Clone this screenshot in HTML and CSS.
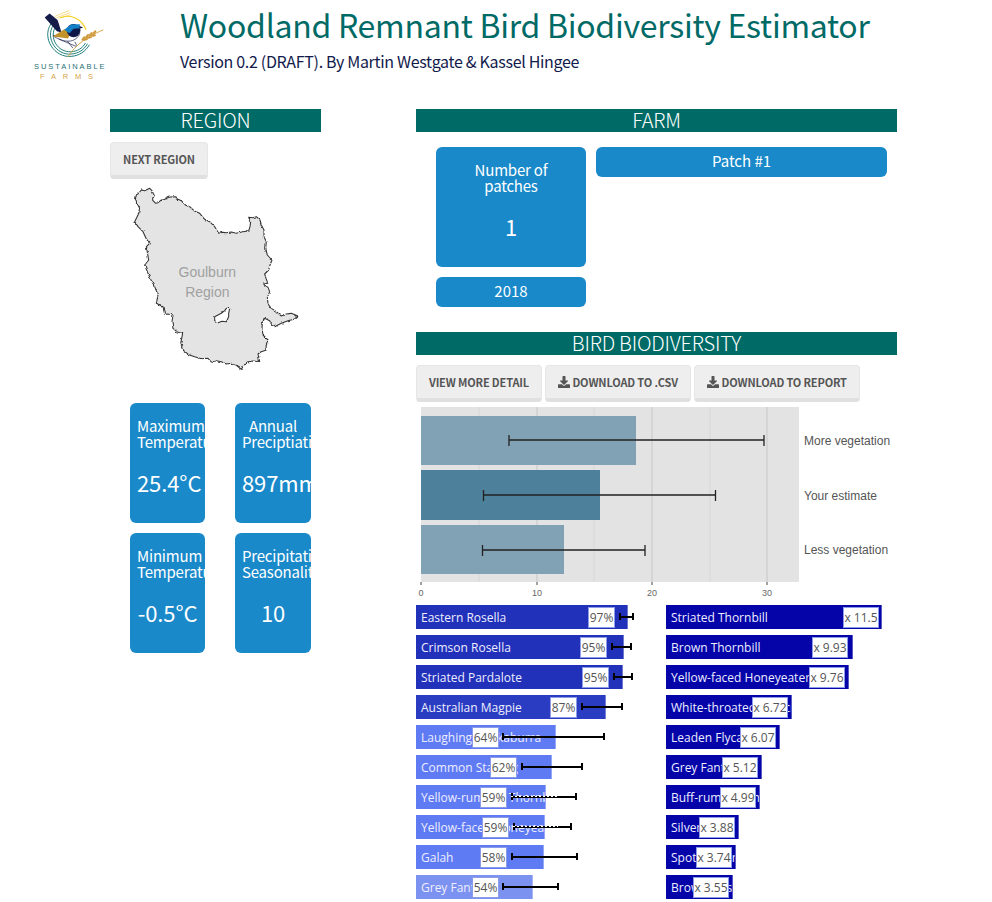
FILE: index.html
```html
<!DOCTYPE html>
<html lang="en">
<head>
<meta charset="utf-8">
<title>Woodland Remnant Bird Biodiversity Estimator</title>
<link rel="stylesheet" href="styles.css">
</head>
<body>
<header class="header">
  <div class="logo">
    <svg class="logo-art" viewBox="130 25 190 155" width="63" height="52" aria-hidden="true">
      <g fill="none" stroke="#f4dc8a" stroke-width="3"><path d="M165 50 L210 31"/><path d="M170 54 L212 38"/><path d="M176 55 L214 44"/></g>
      <path d="M182 54 C215 40 248 58 260 90" fill="none" stroke="#f5d21f" stroke-width="3.500"/>
      <g fill="none" stroke="#1f7f7d" stroke-width="3">
        <path d="M154 72 C125 115 165 175 215 170 C240 168 258 155 270 135"/>
        <path d="M161 76 C136 115 170 167 215 163 C238 161 254 150 264 132"/>
        <path d="M168 80 C147 115 175 158 214 156 C234 155 248 146 258 130"/>
      </g>
      <path d="M135 53 L150 41 L174 60 L186 98 L172 94 Z" fill="#161c4a"/>
      <path d="M160 108 C185 124 222 136 240 104 L242 88 L208 100 Z" fill="#fff" stroke="#161c4a" stroke-width="2"/>
      <path d="M160 110 L194 88 L214 94 L206 116 Z" fill="#c2932a"/>
      <circle cx="222" cy="92" r="20" fill="#0d1848"/>
      <path d="M194 90 L214 74 L241 73 L241 85 L222 87 L210 100 Z" fill="#1280c6"/>
      <path d="M240 78 L251 83 L240 87 Z" fill="#0d1848"/>
      <path d="M204 124 L220 145 M226 126 L232 138 M178 118 L230 140" stroke="#161c4a" stroke-width="2" fill="none"/>
      <path d="M205 172 C222 145 250 115 312 90" fill="none" stroke="#d6a548" stroke-width="3"/>
      <g fill="#cf9a3c">
        <ellipse cx="252" cy="116" rx="8" ry="3.500" transform="rotate(-50 252 116)"/>
        <ellipse cx="263" cy="109" rx="8" ry="3.500" transform="rotate(-50 263 109)"/>
        <ellipse cx="274" cy="103" rx="8" ry="3.500" transform="rotate(-50 274 103)"/>
        <ellipse cx="285" cy="98" rx="8" ry="3.500" transform="rotate(-50 285 98)"/>
        <ellipse cx="258" cy="119" rx="8" ry="3.500" transform="rotate(-10 258 119)"/>
        <ellipse cx="270" cy="113" rx="8" ry="3.500" transform="rotate(-10 270 113)"/>
        <ellipse cx="282" cy="107" rx="8" ry="3.500" transform="rotate(-10 282 107)"/>
      </g>
    </svg>
    <div class="logo-top">SUSTAINABLE</div>
    <div class="logo-bottom">FARMS</div>
  </div>
  <div class="heading">
    <h1 class="title">Woodland Remnant Bird Biodiversity Estimator</h1>
    <p class="byline">Version 0.2 (DRAFT). By Martin Westgate &amp; Kassel Hingee</p>
  </div>
</header>

<main class="main">
  <section class="col-left">
    <h2 class="section-title">REGION</h2>
    <button class="btn btn-next">NEXT REGION</button>
    <svg class="map" viewBox="0 0 633 600" width="211" height="200" role="img" aria-label="Goulburn Region map">
      <defs>
        <filter id="rough" x="-5%" y="-5%" width="110%" height="110%" color-interpolation-filters="sRGB">
          <feTurbulence type="fractalNoise" baseFrequency="0.09" numOctaves="2" seed="4"/>
          <feDisplacementMap in="SourceGraphic" scale="9" xChannelSelector="R" yChannelSelector="G"/>
        </filter>
      </defs>
      <path class="map-shape" transform="translate(4 0)" fill-rule="evenodd" d="M75 45 L82 40 L90 30 L100 32 L115 25 L122 32 L128 45 L124 55 L125 62 L133 70 L140 68 L150 60 L160 58 L172 52 L190 50 L200 58 L210 62 L222 75 L235 80 L248 92 L265 100 L280 118 L295 125 L310 140 L316 150 L322 160 L335 157 L345 158 L360 156 L375 160 L395 155 L412 153 L416 140 L418 125 L412 112 L425 113 L435 110 L446 120 L450 135 L458 150 L458 170 L465 185 L463 205 L468 225 L482 240 L476 255 L472 270 L460 282 L464 295 L470 310 L456 312 L470 322 L475 335 L468 352 L470 372 L480 385 L495 395 L510 408 L525 402 L540 400 L560 408 L548 418 L530 422 L510 430 L490 440 L480 432 L475 422 L460 415 L453 428 L452 445 L455 465 L470 480 L464 495 L465 510 L448 516 L440 522 L445 545 L425 543 L410 545 L400 552 L390 568 L375 556 L360 550 L345 552 L330 545 L315 542 L300 546 L290 535 L270 536 L250 530 L232 524 L215 510 L208 490 L214 460 L198 456 L185 445 L182 425 L185 405 L172 402 L160 403 L155 380 L135 370 L140 345 L130 320 L118 298 L110 280 L100 255 L112 240 L105 200 L115 190 L104 175 L95 155 L80 140 L70 125 L80 105 L85 85 L78 72 L72 60 Z M310 410 L320 405 L330 400 L340 392 L345 385 L355 385 L352 400 L352 410 L345 425 L332 424 L320 428 L310 422 Z"/>
      <text class="map-label" x="292" y="290">Goulburn</text>
      <text class="map-label" x="292" y="350">Region</text>
    </svg>
    <div class="stats">
      <div class="card card-tall">
        <div class="card-label">Maximum Temperature</div>
        <div class="card-value">25.4°C</div>
      </div>
      <div class="card card-tall">
        <div class="card-label">Annual Preciptiation</div>
        <div class="card-value">897mm</div>
      </div>
      <div class="card card-tall">
        <div class="card-label">Minimum Temperature</div>
        <div class="card-value">-0.5°C</div>
      </div>
      <div class="card card-tall">
        <div class="card-label">Precipitation Seasonality</div>
        <div class="card-value">10</div>
      </div>
    </div>
  </section>

  <section class="col-right">
    <h2 class="section-title">FARM</h2>
    <div class="farm">
      <div class="farm-side">
        <div class="card card-tall card-wrap">
          <div class="card-label">Number of patches</div>
          <div class="card-value">1</div>
        </div>
        <div class="card card-short">2018</div>
      </div>
      <div class="farm-patches">
        <div class="card card-short">Patch #1</div>
      </div>
    </div>

    <h2 class="section-title">BIRD BIODIVERSITY</h2>
    <div class="btn-row">
      <button class="btn btn-detail">VIEW MORE DETAIL</button>
      <button class="btn btn-csv"><svg class="icon" viewBox="0 0 512 512" aria-hidden="true"><path d="M216 0h80c13.300 0 24 10.700 24 24v168h87.700c17.800 0 26.700 21.500 14.100 34.100L269.700 378.300c-7.500 7.500-19.800 7.500-27.300 0L90.100 226.100c-12.600-12.600-3.700-34.100 14.100-34.100H192V24c0-13.300 10.700-24 24-24zm296 376v112c0 13.300-10.700 24-24 24H24c-13.300 0-24-10.700-24-24V376c0-13.300 10.700-24 24-24h146.700l49 49c20.100 20.100 52.500 20.100 72.600 0l49-49H488c13.300 0 24 10.700 24 24z"/></svg> DOWNLOAD TO .CSV</button>
      <button class="btn btn-report"><svg class="icon" viewBox="0 0 512 512" aria-hidden="true"><path d="M216 0h80c13.300 0 24 10.700 24 24v168h87.700c17.800 0 26.700 21.500 14.100 34.100L269.700 378.300c-7.500 7.500-19.800 7.500-27.300 0L90.100 226.100c-12.600-12.600-3.700-34.100 14.100-34.100H192V24c0-13.300 10.700-24 24-24zm296 376v112c0 13.300-10.700 24-24 24H24c-13.300 0-24-10.700-24-24V376c0-13.300 10.700-24 24-24h146.700l49 49c20.100 20.100 52.500 20.100 72.600 0l49-49H488c13.300 0 24 10.700 24 24z"/></svg> DOWNLOAD TO REPORT</button>
    </div>

    <svg class="chart" viewBox="0 0 481 197" width="481" height="197" role="img" aria-label="Predicted species richness">
      <rect x="5" y="5" width="378" height="175" fill="#e3e3e3"/>
      <g stroke="#d6d6d6" stroke-width="1"><path d="M63 5V180M178 5V180M294 5V180"/></g>
      <g stroke="#cfcfcf" stroke-width="1.400"><path d="M121 5V180M236 5V180M351 5V180"/></g>
      <rect x="5" y="14" width="215" height="49" fill="#81a2b5"/>
      <rect x="5" y="68" width="179" height="50" fill="#4d819b"/>
      <rect x="5" y="123" width="143" height="49" fill="#81a2b5"/>
      <g stroke="#222" stroke-width="1.300" fill="none">
        <path d="M93 38H348M93 33V44M348 33V44"/>
        <path d="M67.500 93H299.500M67.500 88V99M299.500 88V99"/>
        <path d="M66.500 148H229M66.500 143V154M229 143V154"/>
      </g>
      <g stroke="#444" stroke-width="1"><path d="M5 180V183M121 180V183M236 180V183M351 180V183"/></g>
      <text class="chart-tick" x="5" y="194">0</text>
      <text class="chart-tick" x="121" y="194">10</text>
      <text class="chart-tick" x="236" y="194">20</text>
      <text class="chart-tick" x="351" y="194">30</text>
      <text class="chart-label" x="388" y="43">More vegetation</text>
      <text class="chart-label" x="388" y="98">Your estimate</text>
      <text class="chart-label" x="388" y="152">Less vegetation</text>
    </svg>

    <div class="ranks">
      <div class="rank-col">
        <div class="rank"><div class="bar bar-a" style="width:212px"><span class="bar-text">Eastern Rosella</span><span class="tag" style="left:172px">97%</span></div><i class="err" style="left:203px;width:15px"></i></div>
        <div class="rank"><div class="bar bar-a" style="width:208px"><span class="bar-text">Crimson Rosella</span><span class="tag" style="left:164px">95%</span></div><i class="err" style="left:195px;width:21px"></i></div>
        <div class="rank"><div class="bar bar-a" style="width:207px"><span class="bar-text">Striated Pardalote</span><span class="tag" style="left:166px">95%</span></div><i class="err" style="left:197px;width:20px"></i></div>
        <div class="rank"><div class="bar bar-b" style="width:190px"><span class="bar-text">Australian Magpie</span><span class="tag" style="left:134px">87%</span></div><i class="err" style="left:165px;width:42px"></i></div>
        <div class="rank"><div class="bar bar-c" style="width:140px"><span class="bar-text">Laughing Kookaburra</span><span class="tag" style="left:56px">64%</span></div><i class="err" style="left:86px;width:103px"></i></div>
        <div class="rank"><div class="bar bar-c" style="width:136px"><span class="bar-text">Common Starling</span><span class="tag" style="left:74px">62%</span></div><i class="err" style="left:105px;width:62px"></i></div>
        <div class="rank"><div class="bar bar-c" style="width:130px"><span class="bar-text">Yellow-rumped Thornbill</span><span class="tag" style="left:64px">59%</span></div><i class="err" style="left:95px;width:66px"></i><i class="dots" style="left:95px;width:47px"></i></div>
        <div class="rank"><div class="bar bar-c" style="width:129px"><span class="bar-text">Yellow-faced Honeyeater</span><span class="tag" style="left:66px">59%</span></div><i class="err" style="left:97px;width:59px"></i><i class="dots" style="left:97px;width:45px"></i></div>
        <div class="rank"><div class="bar bar-c" style="width:128px"><span class="bar-text">Galah</span><span class="tag" style="left:64px">58%</span></div><i class="err" style="left:95px;width:67px"></i></div>
        <div class="rank"><div class="bar bar-d" style="width:117px"><span class="bar-text">Grey Fantail</span><span class="tag" style="left:56px">54%</span></div><i class="err" style="left:86px;width:57px"></i></div>
      </div>
      <div class="rank-col">
        <div class="rank"><div class="bar bar-e" style="width:216px"><span class="bar-text">Striated Thornbill</span><span class="tag tag-wide" style="left:177px">x 11.5</span></div></div>
        <div class="rank"><div class="bar bar-e" style="width:187px"><span class="bar-text">Brown Thornbill</span><span class="tag tag-wide" style="left:146px">x 9.93</span></div></div>
        <div class="rank"><div class="bar bar-e" style="width:183px"><span class="bar-text">Yellow-faced Honeyeater</span><span class="tag tag-wide" style="left:143px">x 9.76</span></div></div>
        <div class="rank"><div class="bar bar-e" style="width:126px"><span class="bar-text">White-throated Treecreeper</span><span class="tag tag-wide" style="left:86px">x 6.72</span></div></div>
        <div class="rank"><div class="bar bar-e" style="width:114px"><span class="bar-text">Leaden Flycatcher</span><span class="tag tag-wide" style="left:74px">x 6.07</span></div></div>
        <div class="rank"><div class="bar bar-e" style="width:96px"><span class="bar-text">Grey Fantail</span><span class="tag tag-wide" style="left:56px">x 5.12</span></div></div>
        <div class="rank"><div class="bar bar-e" style="width:94px"><span class="bar-text">Buff-rumped Thornbill</span><span class="tag tag-wide" style="left:54px">x 4.99</span></div></div>
        <div class="rank"><div class="bar bar-e" style="width:73px"><span class="bar-text">Silvereye</span><span class="tag tag-wide" style="left:33px">x 3.88</span></div></div>
        <div class="rank"><div class="bar bar-e" style="width:70px"><span class="bar-text">Spotted Pardalote</span><span class="tag tag-wide" style="left:30px">x 3.74</span></div></div>
        <div class="rank"><div class="bar bar-e" style="width:67px"><span class="bar-text">Brown Goshawk</span><span class="tag tag-wide" style="left:27px">x 3.55</span></div></div>
      </div>
    </div>
  </section>
</main>
</body>
</html>
```
FILE: styles.css
```css
* { box-sizing: border-box; }
html, body { margin: 0; padding: 0; background: #fff; overflow: hidden; }
body {
  font-family: "Noto Sans CJK SC", "Noto Sans CJK JP", "Noto Sans", sans-serif;
  color: #333;
}
.header { display: flex; height: 109px; }
.logo { width: 180px; padding: 8px 0 0 34px; }
.logo-art { display: block; margin-left: 9px; }
.logo-top, .logo-bottom {
  width: 72px;
  text-align: center;
  font-family: "Liberation Sans", sans-serif;
  font-size: 7.500px;
  line-height: 9px;
}
.logo-top { margin-top: 2px; color: #1f7274; letter-spacing: 1.950px; }
.logo-bottom { margin-top: 1px; color: #d3a347; letter-spacing: 6.800px; }
.heading { padding-top: 4px; }
.title {
  margin: 0;
  font-size: 32px;
  font-weight: 400;
  line-height: 40px;
  letter-spacing: -.27px;
  color: #006a66;
}
.byline {
  margin: 7px 0 0;
  font-size: 16px;
  line-height: 20px;
  letter-spacing: -.32px;
  color: #121a4c;
}
.main { display: flex; padding-left: 110px; gap: 95px; }
.col-left { width: 211px; }
.col-right { width: 481px; }
.section-title {
  margin: 0;
  height: 23px;
  background: #006a66;
  color: #fff;
  font-size: 20px;
  font-weight: 300;
  line-height: 21px;
  letter-spacing: -.2px;
  text-align: center;
}
.btn {
  display: block;
  height: 37px;
  padding: 0;
  border: 1px solid #e6e6e6;
  border-bottom: 4px solid #e0e0e0;
  border-radius: 4px;
  background: #eee;
  color: #555;
  font-family: inherit;
  font-size: 11px;
  font-weight: 700;
  line-height: 30px;
  letter-spacing: -.15px;
  white-space: nowrap;
  text-align: center;
}
.btn-next { width: 98px; margin-top: 10px; }
.map { display: block; margin-top: 1px; }
.map-shape { fill: #e4e4e4; stroke: #333; stroke-width: 3.200; stroke-linejoin: round; filter: url(#rough); }
.map-label {
  font-family: "Liberation Sans", sans-serif;
  font-size: 42px;
  fill: #a0a0a0;
  text-anchor: middle;
}
.stats {
  display: grid;
  grid-template-columns: 75px 76px;
  column-gap: 30px;
  row-gap: 10px;
  margin: 23px 0 0 20px;
}
.card {
  background: #1a89c9;
  border-radius: 6px;
  color: #fff;
  text-align: center;
  overflow: hidden;
  font-size: 15px;
}
.card-tall { height: 120px; padding: 15px 7px 0; }
.card-wrap { padding-left: 30px; padding-right: 30px; }
.card-short { height: 30px; line-height: 28px; }
.card-label { line-height: 16px; letter-spacing: -.2px; }
.card-value { margin-top: 15px; font-size: 22px; line-height: 34px; letter-spacing: -.1px; white-space: nowrap; }
.farm { display: flex; gap: 10px; padding: 15px 10px 0 20px; height: 200px; }
.farm-side { display: flex; flex-direction: column; gap: 10px; width: 150px; }
.farm-patches { flex: 1; }
.btn-row { display: flex; gap: 3px; margin-top: 10px; }
.btn-detail { width: 126px; }
.btn-csv { width: 146px; }
.btn-report { width: 166px; }
.icon { width: 12px; height: 12px; fill: #555; vertical-align: -1px; }
.chart { display: block; }
.chart-tick {
  font-family: "Liberation Sans", sans-serif;
  font-size: 9px;
  fill: #666;
  text-anchor: middle;
}
.chart-label {
  font-family: "Liberation Sans", sans-serif;
  font-size: 12px;
  fill: #555;
}
.ranks { display: grid; grid-template-columns: 250px 231px; margin-top: 6px; }
.rank { position: relative; height: 24px; margin-bottom: 6px; }
.bar {
  position: relative;
  height: 24px;
  overflow: hidden;
  border-right: 1px solid rgba(255, 255, 255, .35);
}
.bar-a { background: #2231b9; }
.bar-b { background: #2a3dc2; }
.bar-c { background: #5f7bf4; }
.bar-d { background: #7c92f0; }
.bar-e { background: #0404a8; }
.bar-text {
  position: absolute;
  left: 5px;
  top: 1px;
  font-family: "Open Sans", sans-serif;
  font-size: 12px;
  line-height: 24px;
  color: #eef;
  white-space: nowrap;
}
.tag {
  position: absolute;
  top: 2px;
  width: 27px;
  height: 21px;
  background: #fff;
  border: 1px solid #8b9bea;
  font-family: "Open Sans", sans-serif;
  font-size: 12px;
  line-height: 19px;
  color: #555;
  text-align: center;
  white-space: nowrap;
  overflow: hidden;
}
.tag-wide { width: 36px; }
.err {
  position: absolute;
  top: 8px;
  height: 7px;
  border-left: 2px solid #000;
  border-right: 2px solid #000;
  background: linear-gradient(#000, #000) center / 100% 2px no-repeat;
}
.dots {
  position: absolute;
  top: 11px;
  height: 1px;
  background: repeating-linear-gradient(90deg, #fff 0 2px, transparent 2px 4px);
}
```
